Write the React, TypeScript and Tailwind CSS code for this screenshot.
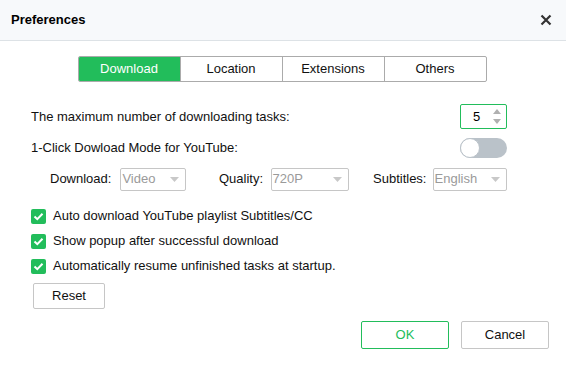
import React from "react";

const Caret = () => (
  <svg width="9" height="5" viewBox="0 0 9 5"><path d="M0 0H9L4.5 5Z" fill="#c8c8c8" /></svg>
);

const Select = ({ value, w }: { value: string; w: string }) => (
  <div className={`${w} h-[23px] border border-[#c6c6c6] rounded-[2px] flex items-center justify-between pl-[1px] pr-[6px] text-[#9a9a9a] bg-white`}>
    <span>{value}</span>
    <Caret />
  </div>
);

const Check = ({ label }: { label: string }) => (
  <div className="flex items-center h-[24px]">
    <div className="w-[15px] h-[15px] rounded-[2px] bg-[#22bd5b] flex items-center justify-center">
      <svg width="11" height="9" viewBox="0 0 11 9"><path d="M1.5 4.5L4.3 7.2L9.5 1.8" stroke="white" strokeWidth="2" fill="none" /></svg>
    </div>
    <span className="ml-[7px] text-[#111]">{label}</span>
  </div>
);

export default function App() {
  return (
    <div className="w-[566px] h-[366px] bg-white text-[13px] text-[#111] overflow-hidden" style={{ fontFamily: "Tahoma, 'Liberation Sans', Arial, sans-serif" }}>
      <div className="h-[41px] bg-[#f7f9fb] border-b border-[#dde2e6] flex items-center justify-between pl-[11px] pr-[14px]">
        <span className="font-bold text-[13px] text-black">Preferences</span>
        <svg width="12" height="12" viewBox="0 0 12 12"><path d="M1.5 1.5L10.5 10.5M10.5 1.5L1.5 10.5" stroke="#333" strokeWidth="2.2" /></svg>
      </div>
      <div className="flex justify-center mt-[15px] pr-[2px]">
        <div className="flex h-[26px] border border-[#ababab] rounded-[2px] overflow-hidden">
          <div className="w-[101px] bg-[#22bd5b] text-white flex items-center justify-center">Download</div>
          <div className="w-[102px] border-l border-[#ababab] flex items-center justify-center">Location</div>
          <div className="w-[102px] border-l border-[#ababab] flex items-center justify-center">Extensions</div>
          <div className="w-[102px] border-l border-[#ababab] flex items-center justify-center">Others</div>
        </div>
      </div>
      <div className="pl-[31px] pr-[59px]">
        <div className="flex items-center justify-between mt-[22px] h-[25px]">
          <span>The maximum number of downloading tasks:</span>
          <div className="w-[47px] h-[25px] border border-[#22bd5b] rounded-[2px] flex items-center justify-between pl-[12px] pr-[5px]">
            <span className="text-black">5</span>
            <div className="flex flex-col gap-[5px]">
              <svg width="8" height="5" viewBox="0 0 8 5"><path d="M0 5H8L4 0Z" fill="#b0b0b0" /></svg>
              <svg width="8" height="5" viewBox="0 0 8 5"><path d="M0 0H8L4 5Z" fill="#b0b0b0" /></svg>
            </div>
          </div>
        </div>
        <div className="flex items-center justify-between mt-[8px] h-[21px]">
          <span>1-Click Dowload Mode for YouTube:</span>
          <div className="w-[47px] h-[20px] rounded-full bg-[#bac2c9] relative">
            <div className="absolute left-0 top-0 w-[20px] h-[20px] rounded-full bg-white border border-[#bac2c9]" />
          </div>
        </div>
        <div className="flex items-center mt-[9px] h-[24px]">
          <span className="ml-[19px] w-[71px]">Download:</span>
          <Select value="Video" w="w-[66px]" />
          <span className="ml-[33px] w-[52px]">Quality:</span>
          <Select value="720P" w="w-[79px]" />
          <span className="ml-[24px] w-[60px]">Subtitles:</span>
          <Select value="English" w="w-[75px]" />
        </div>
        <div className="mt-[13px] flex flex-col gap-[1px]">
          <Check label="Auto download YouTube playlist Subtitles/CC" />
          <Check label="Show popup after successful download" />
          <Check label="Automatically resume unfinished tasks at startup." />
        </div>
        <div className="mt-[5px] ml-[2px] w-[72px] h-[26px] border border-[#c6c6c6] rounded-[2px] flex items-center justify-center">Reset</div>
      </div>
      <div className="flex justify-end gap-[12px] pr-[17px] mt-[12px]">
        <div className="w-[88px] h-[28px] border border-[#22bd5b] rounded-[2px] flex items-center justify-center text-[#22bd5b]">OK</div>
        <div className="w-[88px] h-[28px] border border-[#c6c6c6] rounded-[2px] flex items-center justify-center">Cancel</div>
      </div>
    </div>
  );
}
